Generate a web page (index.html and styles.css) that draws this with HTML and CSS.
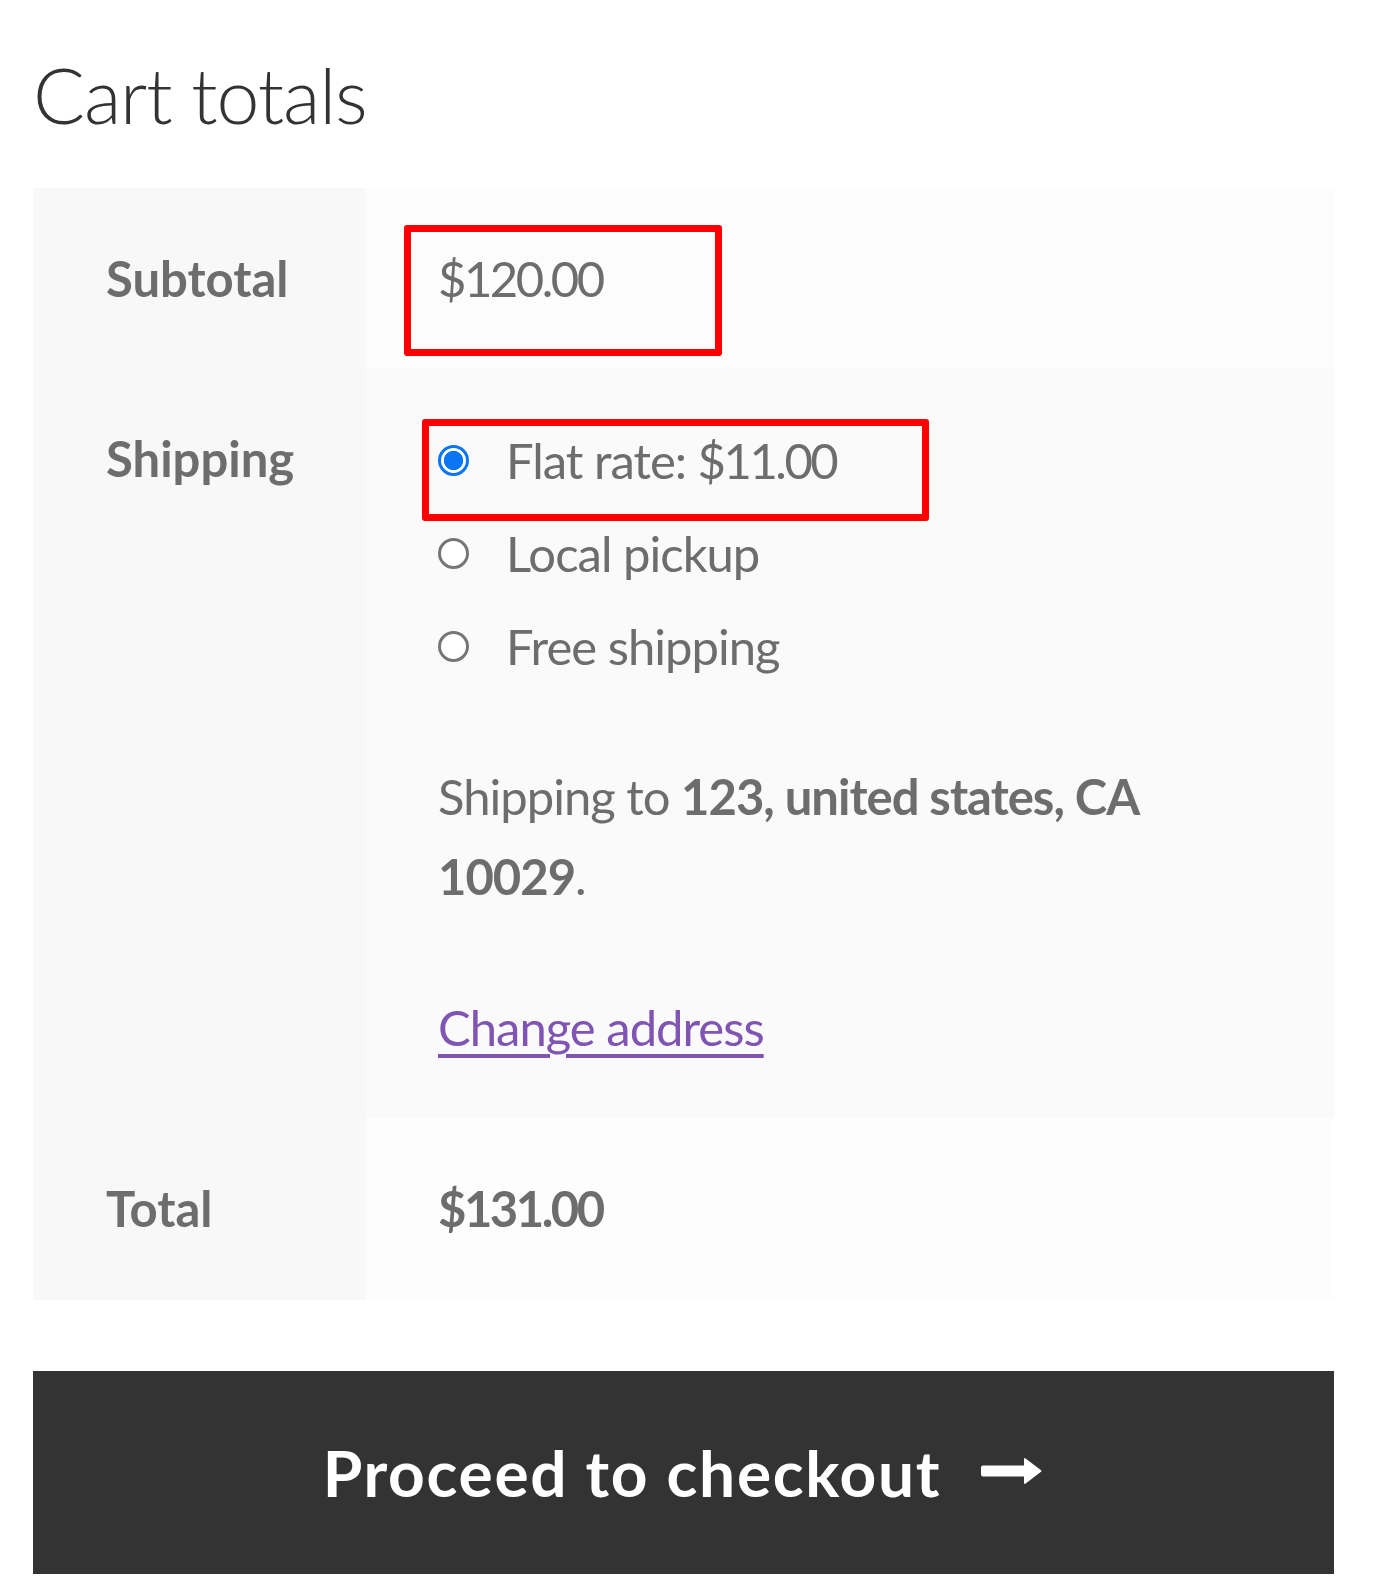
FILE: index.html
```html
<!DOCTYPE html>
<html lang="en">
<head>
<meta charset="utf-8">
<title>Cart totals</title>
<link rel="stylesheet" href="styles.css">
</head>
<body>
<div class="cart-collaterals">
  <h2 class="cart-title">Cart totals</h2>
  <table class="totals">
    <colgroup><col class="col-label"><col class="col-value"></colgroup>
    <tbody>
      <tr class="row-subtotal">
        <th>Subtotal</th>
        <td><span class="amount">$120.00</span></td>
      </tr>
      <tr class="row-shipping">
        <th>Shipping</th>
        <td>
          <ul class="methods">
            <li><span class="radio checked"></span><span>Flat rate: <span class="amount">$11.00</span></span></li>
            <li><span class="radio"></span><span>Local pickup</span></li>
            <li><span class="radio"></span><span>Free shipping</span></li>
          </ul>
          <p class="destination">Shipping to <strong>123, united states, CA 10029</strong>.</p>
          <p class="change"><a href="#">Change address</a></p>
        </td>
      </tr>
      <tr class="row-total">
        <th>Total</th>
        <td><strong class="amount">$131.00</strong></td>
      </tr>
    </tbody>
  </table>
  <a class="checkout" href="#"><span>Proceed to checkout</span><svg class="arrow" width="64" height="32" viewBox="0 0 64 32" aria-hidden="true"><path d="M3 10.5H44V4.5Q44 2 46 3.8L61 15.2Q62 16 61 16.8L46 28.2Q44 30 44 27.5V21.5H3Q1 21.5 1 19.5V12.5Q1 10.5 3 10.5Z" fill="#fff"/></svg></a>
  <div class="mark mark-subtotal"></div>
  <div class="mark mark-flat"></div>
</div>
</body>
</html>
```
FILE: styles.css
```css
html, body {
  margin: 0;
  padding: 0;
  background: #fff;
}
body {
  font-family: Lato, "Open Sans", sans-serif;
  color: #6d6d6d;
  font-size: 49px;
  line-height: 80px;
  letter-spacing: -1px;
}
.cart-collaterals {
  position: relative;
  width: 1301px;
  padding: 46px 0 0 33px;
}
.cart-title {
  margin: 0 0 46px 0;
  font-size: 77px;
  line-height: 96px;
  font-weight: 300;
  color: #333;
  letter-spacing: -1.1px;
}
.totals {
  width: 1301px;
  border-collapse: collapse;
  table-layout: fixed;
  border-spacing: 0;
}
.col-label { width: 333px; }
.totals th {
  text-align: left;
  vertical-align: top;
  font-weight: 700;
  letter-spacing: 0;
  background: #f8f8f8;
  padding: 50px 20px 50px 73px;
}
.totals td {
  vertical-align: top;
  padding: 50px 72px 50px 72px;
}
.row-subtotal td { background: #fcfcfc; }
.row-shipping td { background: #fafafa; padding-bottom: 50.5px; }
.row-total th, .row-total td { padding-bottom: 52px; }
.row-total td { background: #fdfdfd; }
.totals strong { font-weight: 700; }
.amount { letter-spacing: -2.5px; }
.methods {
  list-style: none;
  margin: 2px 0 0 0;
  padding: 0;
}
.methods li {
  display: flex;
  align-items: center;
  height: 80px;
  margin-bottom: 13px;
}
.methods li:last-child { margin-bottom: 0; }
.radio {
  box-sizing: border-box;
  width: 31px;
  height: 31px;
  border: 3px solid #767676;
  border-radius: 50%;
  background: #fff;
  margin-right: 37px;
  flex: none;
}
.radio.checked {
  border: 3px solid #0a75f5;
  background: radial-gradient(circle, #0a75f5 0 9.3px, #fff 10px);
}
.destination {
  margin: 70px 0 0 0;
}
.change {
  margin: 71px 0 0 0;
}
.change a {
  color: #7f54b3;
  text-decoration: underline;
  text-decoration-thickness: 4px;
  text-underline-offset: 8px;
}
.checkout {
  display: flex;
  align-items: center;
  justify-content: center;
  gap: 39px;
  margin-top: 71px;
  height: 203px;
  background: #333;
  color: #fff;
  font-size: 64px;
  line-height: 77px;
  font-weight: 700;
  letter-spacing: 1.7px;
  text-decoration: none;
}
.arrow { flex: none; margin-top: -3px; }
.mark {
  position: absolute;
  border: 7px solid #ff0000;
  border-radius: 3px;
  box-sizing: border-box;
}
.mark-subtotal {
  left: 404px;
  top: 225px;
  width: 318px;
  height: 131px;
}
.mark-flat {
  left: 422px;
  top: 419px;
  width: 507px;
  height: 102px;
}
```
